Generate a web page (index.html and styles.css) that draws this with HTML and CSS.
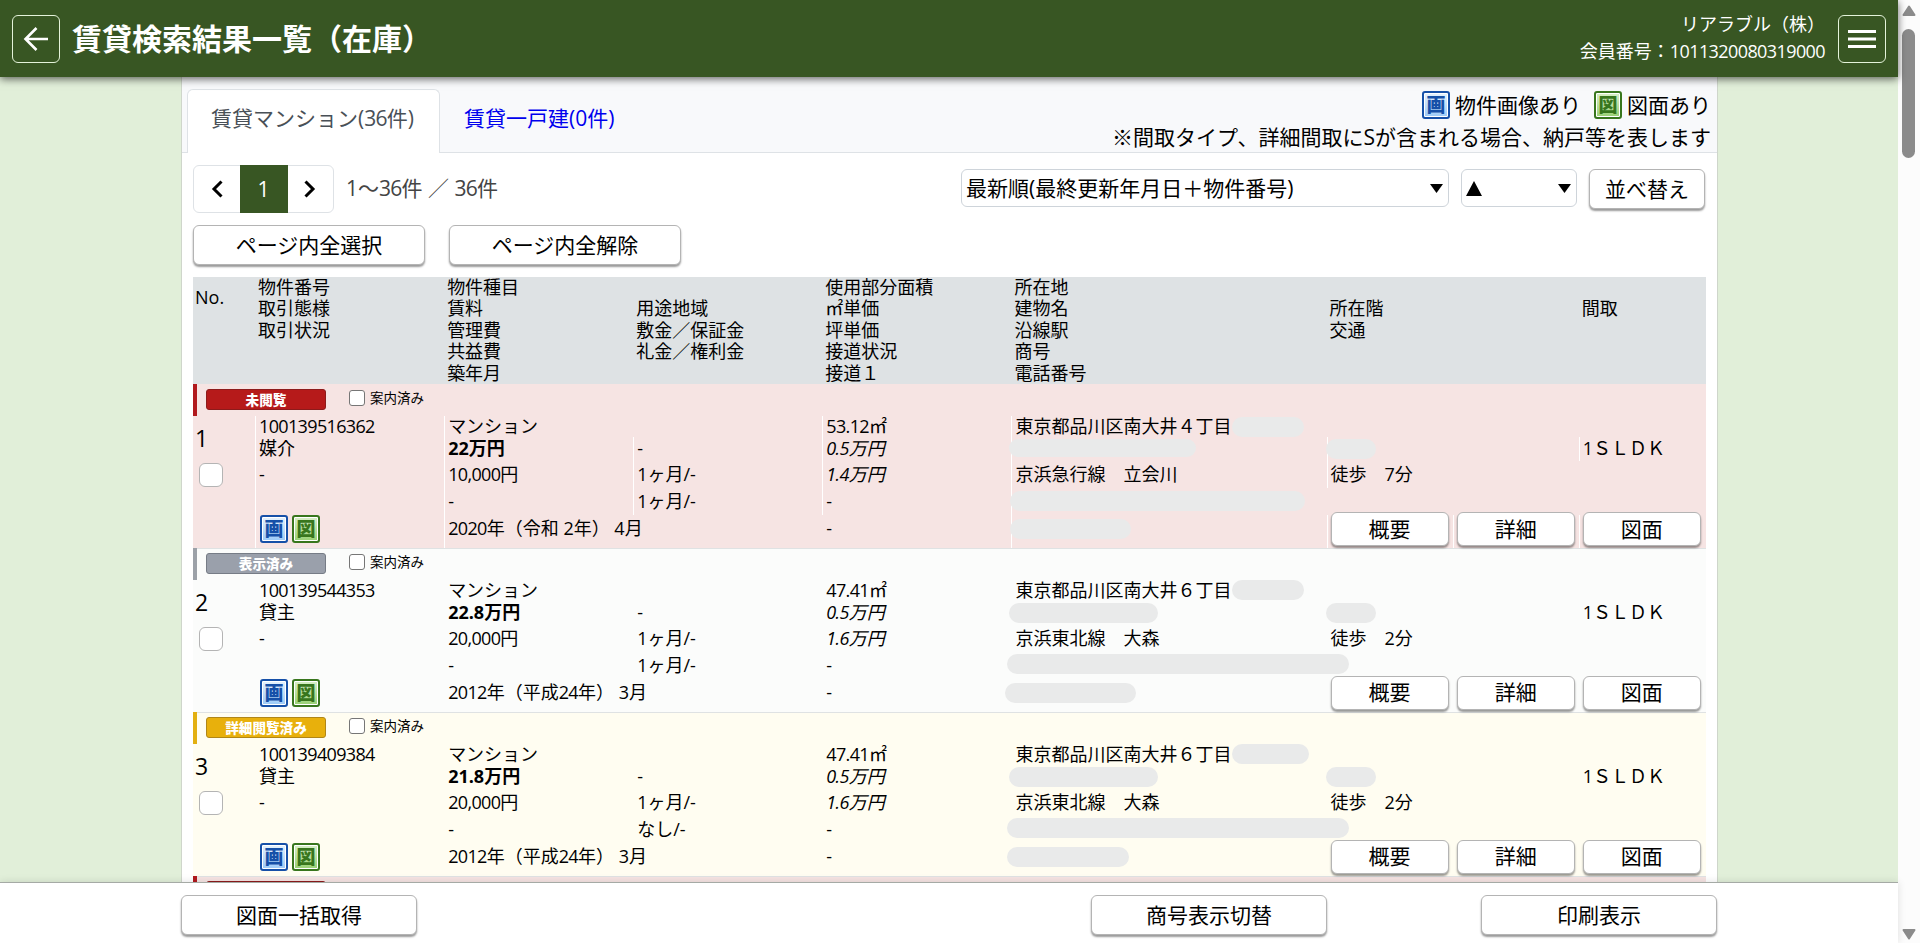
FILE: index.html
```html
<!DOCTYPE html>
<html lang="ja">
<head>
<meta charset="UTF-8" />
<meta name="viewport" content="width=device-width, initial-scale=1" />
<title>賃貸検索結果一覧（在庫）</title>
<link rel="stylesheet" href="styles.css">
</head>
<body>
<div class="app">
  <header class="header">
    <button class="header-btn" aria-label="戻る">
      <svg width="26" height="26" viewBox="0 0 26 26" fill="none" stroke="#fff" stroke-width="2.6"><path d="M25 13H3M13.5 2L2.5 13l11 11"/></svg>
    </button>
    <h1>賃貸検索結果一覧（在庫）</h1>
    <div class="member">
      <div>リアラブル（株）</div>
      <div>会員番号：<span class="num">1011320080319000</span></div>
    </div>
    <button class="header-btn" aria-label="メニュー">
      <svg width="28" height="20" viewBox="0 0 28 20" fill="#fff"><path d="M0 1h28v3H0zM0 8.500h28v3H0zM0 16h28v3H0z"/></svg>
    </button>
  </header>

  <main class="main">
    <div class="container">
      <div class="tabs">
        <a class="tab active">賃貸マンション(<span class="num">36</span>件)</a>
        <a class="tab">賃貸一戸建(0件)</a>
        <div class="legend">
          <div class="legend-icons">
            <span class="icon icon-img">画</span><span>物件画像あり</span>
            <span class="icon icon-zu">図</span><span>図面あり</span>
          </div>
          <div>※間取タイプ、詳細間取にSが含まれる場合、納戸等を表します</div>
        </div>
      </div>

      <div class="toolbar">
        <div class="pager">
          <a><svg width="12" height="18" viewBox="0 0 12 18" fill="none" stroke="#000" stroke-width="3"><path d="M10.500 1.500L3 9l7.500 7.500"/></svg></a>
          <a class="current">1</a>
          <a><svg width="12" height="18" viewBox="0 0 12 18" fill="none" stroke="#000" stroke-width="3"><path d="M1.500 1.500L9 9l-7.500 7.500"/></svg></a>
        </div>
        <div class="count">1～<span class="num">36</span>件 ／ <span class="num">36</span>件</div>
        <div class="select select-sort">
          <span>最新順(最終更新年月日＋物件番号)</span>
          <svg width="13" height="9" viewBox="0 0 13 9"><path d="M0 0h13L6.500 9z"/></svg>
        </div>
        <div class="select select-order">
          <svg width="16" height="15" viewBox="0 0 16 15"><path d="M8 0l8 15H0z"/></svg>
          <svg width="13" height="9" viewBox="0 0 13 9"><path d="M0 0h13L6.500 9z"/></svg>
        </div>
        <button class="btn btn-sort">並べ替え</button>
      </div>

      <div class="select-all">
        <button class="btn">ページ内全選択</button>
        <button class="btn">ページ内全解除</button>
      </div>

      <div class="grid head">
        <div class="c1 head-no">No.</div>
        <div class="c2 r1">物件番号</div>
        <div class="c2 r2">取引態様</div>
        <div class="c2 r3">取引状況</div>
        <div class="c3 r1">物件種目</div>
        <div class="c3 r2">賃料</div>
        <div class="c3 r3">管理費</div>
        <div class="c3 r4">共益費</div>
        <div class="c3 r5">築年月</div>
        <div class="c4 r2">用途地域</div>
        <div class="c4 r3">敷金／保証金</div>
        <div class="c4 r4">礼金／権利金</div>
        <div class="c5 r1">使用部分面積</div>
        <div class="c5 r2">㎡単価</div>
        <div class="c5 r3">坪単価</div>
        <div class="c5 r4">接道状況</div>
        <div class="c5 r5">接道１</div>
        <div class="c6 r1">所在地</div>
        <div class="c6 r2">建物名</div>
        <div class="c6 r3">沿線駅</div>
        <div class="c6 r4">商号</div>
        <div class="c6 r5">電話番号</div>
        <div class="c7 r2">所在階</div>
        <div class="c7 r3">交通</div>
        <div class="c9 r2">間取</div>
      </div>

      <section class="item unread">
        <div class="status">
          <span class="badge">未閲覧</span>
          <label><input type="checkbox" />案内済み</label>
        </div>
        <div class="grid body">
          <div class="c1 no"><span>1</span><input type="checkbox" /></div>
          <div class="c2 r1"><span class="num">100139516362</span></div>
          <div class="c2 r2">媒介</div>
          <div class="c2 r3">-</div>
          <div class="c2 r4"></div>
          <div class="c2 r5 icons"><span class="icon icon-img">画</span><span class="icon icon-zu">図</span></div>
          <div class="c3 r1">マンション</div>
          <div class="c3 r2 price">22万円</div>
          <div class="c3 r3"><span class="num">10,000</span>円</div>
          <div class="c3 r4">-</div>
          <div class="c3 r5"><span class="num">2020</span>年（令和 2年） 4月</div>
          <div class="c4 r2">-</div>
          <div class="c4 r3">1ヶ月/-</div>
          <div class="c4 r4">1ヶ月/-</div>
          <div class="c5 r1"><span class="num">53.12</span>㎡</div>
          <div class="c5 r2 unit"><span class="num">0.5</span>万円</div>
          <div class="c5 r3 unit"><span class="num">1.4</span>万円</div>
          <div class="c5 r4">-</div>
          <div class="c5 r5 noline">-</div>
          <div class="c6 r1">東京都品川区南大井４丁目<i class="mask mask-addr"></i></div>
          <div class="c6 r2"><i class="mask mask-name"></i></div>
          <div class="c6 r3">京浜急行線　立会川</div>
          <div class="c6 r4"><i class="mask mask-shop"></i></div>
          <div class="c6 r5"><i class="mask mask-tel"></i></div>
          <div class="c7 r2"><i class="mask mask-floor"></i></div>
          <div class="c7 r3">徒歩　7分</div>
          <div class="c9 r2">1ＳＬＤＫ</div>
          <div class="c7 r5 action"><button class="btn">概要</button></div>
          <div class="c8 r5 action"><button class="btn">詳細</button></div>
          <div class="c9 r5 action"><button class="btn">図面</button></div>
        </div>
      </section>

      <section class="item shown">
        <div class="status">
          <span class="badge">表示済み</span>
          <label><input type="checkbox" />案内済み</label>
        </div>
        <div class="grid body">
          <div class="c1 no"><span>2</span><input type="checkbox" /></div>
          <div class="c2 r1"><span class="num">100139544353</span></div>
          <div class="c2 r2">貸主</div>
          <div class="c2 r3">-</div>
          <div class="c2 r5 icons"><span class="icon icon-img">画</span><span class="icon icon-zu">図</span></div>
          <div class="c3 r1">マンション</div>
          <div class="c3 r2 price">22.8万円</div>
          <div class="c3 r3"><span class="num">20,000</span>円</div>
          <div class="c3 r4">-</div>
          <div class="c3 r5"><span class="num">2012</span>年（平成<span class="num">24</span>年） 3月</div>
          <div class="c4 r2">-</div>
          <div class="c4 r3">1ヶ月/-</div>
          <div class="c4 r4">1ヶ月/-</div>
          <div class="c5 r1"><span class="num">47.41</span>㎡</div>
          <div class="c5 r2 unit"><span class="num">0.5</span>万円</div>
          <div class="c5 r3 unit"><span class="num">1.6</span>万円</div>
          <div class="c5 r4">-</div>
          <div class="c5 r5 noline">-</div>
          <div class="c6 r1">東京都品川区南大井６丁目<i class="mask mask-addr"></i></div>
          <div class="c6 r2"><i class="mask mask-name"></i></div>
          <div class="c6 r3">京浜東北線　大森</div>
          <div class="c6 r4"><i class="mask mask-shop"></i></div>
          <div class="c6 r5"><i class="mask mask-tel"></i></div>
          <div class="c7 r2"><i class="mask mask-floor"></i></div>
          <div class="c7 r3">徒歩　2分</div>
          <div class="c9 r2">1ＳＬＤＫ</div>
          <div class="c7 r5 action"><button class="btn">概要</button></div>
          <div class="c8 r5 action"><button class="btn">詳細</button></div>
          <div class="c9 r5 action"><button class="btn">図面</button></div>
        </div>
      </section>

      <section class="item viewed">
        <div class="status">
          <span class="badge">詳細閲覧済み</span>
          <label><input type="checkbox" />案内済み</label>
        </div>
        <div class="grid body">
          <div class="c1 no"><span>3</span><input type="checkbox" /></div>
          <div class="c2 r1"><span class="num">100139409384</span></div>
          <div class="c2 r2">貸主</div>
          <div class="c2 r3">-</div>
          <div class="c2 r5 icons"><span class="icon icon-img">画</span><span class="icon icon-zu">図</span></div>
          <div class="c3 r1">マンション</div>
          <div class="c3 r2 price">21.8万円</div>
          <div class="c3 r3"><span class="num">20,000</span>円</div>
          <div class="c3 r4">-</div>
          <div class="c3 r5"><span class="num">2012</span>年（平成<span class="num">24</span>年） 3月</div>
          <div class="c4 r2">-</div>
          <div class="c4 r3">1ヶ月/-</div>
          <div class="c4 r4">なし/-</div>
          <div class="c5 r1"><span class="num">47.41</span>㎡</div>
          <div class="c5 r2 unit"><span class="num">0.5</span>万円</div>
          <div class="c5 r3 unit"><span class="num">1.6</span>万円</div>
          <div class="c5 r4">-</div>
          <div class="c5 r5 noline">-</div>
          <div class="c6 r1">東京都品川区南大井６丁目<i class="mask mask-addr"></i></div>
          <div class="c6 r2"><i class="mask mask-name"></i></div>
          <div class="c6 r3">京浜東北線　大森</div>
          <div class="c6 r4"><i class="mask mask-shop"></i></div>
          <div class="c6 r5"><i class="mask mask-tel"></i></div>
          <div class="c7 r2"><i class="mask mask-floor"></i></div>
          <div class="c7 r3">徒歩　2分</div>
          <div class="c9 r2">1ＳＬＤＫ</div>
          <div class="c7 r5 action"><button class="btn">概要</button></div>
          <div class="c8 r5 action"><button class="btn">詳細</button></div>
          <div class="c9 r5 action"><button class="btn">図面</button></div>
        </div>
      </section>

      <section class="item unread">
        <div class="status">
          <span class="badge"></span>
          <label><input type="checkbox" /></label>
        </div>
      </section>
    </div>
  </main>

  <footer class="footer">
    <div class="footer-inner">
      <button class="btn">図面一括取得</button>
      <button class="btn push">商号表示切替</button>
      <button class="btn">印刷表示</button>
    </div>
  </footer>
</div>

<div class="scrollbar">
  <svg width="14" height="11" viewBox="0 0 14 11" fill="#8b8b8b" stroke="#8b8b8b" stroke-width="2" stroke-linejoin="round"><path d="M7 1.500l5.500 8.500h-11z"/></svg>
  <div class="thumb"></div>
  <svg class="down" width="14" height="11" viewBox="0 0 14 11" fill="#8b8b8b" stroke="#8b8b8b" stroke-width="2" stroke-linejoin="round"><path d="M7 9.500L1.500 1h11z"/></svg>
</div>
</body>
</html>
```
FILE: styles.css
```css
* {
  box-sizing: border-box;
}
body {
  margin: 0;
  height: 100vh;
  display: flex;
  overflow: hidden;
  background: #fcfcfc;
  color: #000;
  font-family: "Open Sans", "Noto Sans CJK JP", sans-serif;
  font-size: 21px;
}
button {
  font-family: inherit;
  padding: 0;
}
.num {
  letter-spacing: -0.036em;
}
.app {
  flex: 1;
  min-width: 0;
  display: flex;
  flex-direction: column;
  background: #e1efd9;
}

/* header */
.header {
  position: relative;
  z-index: 2;
  flex: none;
  height: 77px;
  padding: 0 12px;
  display: flex;
  align-items: center;
  background: #385623;
  color: #fff;
  box-shadow: 0 2px 8px rgba(0, 0, 0, 0.6);
}
.header h1 {
  margin: 0 auto 0 12px;
  font-size: 30px;
  line-height: 40px;
  font-weight: 700;
}
.header-btn {
  width: 48px;
  height: 48px;
  display: flex;
  align-items: center;
  justify-content: center;
  background: none;
  border: 1px solid #e4f3da;
  border-radius: 6px;
}
.member {
  margin-right: 13px;
  padding-bottom: 2px;
  font-size: 18px;
  line-height: 27px;
  text-align: right;
}
.member .num {
  letter-spacing: -0.033em;
}

/* content */
.main {
  flex: 1;
  min-height: 0;
  overflow: hidden;
}
.container {
  width: 1537px;
  margin-left: 181px;
  background: #fff;
  border: solid #cfd6cb;
  border-width: 0 1px;
  height: 100%;
  overflow: hidden;
}
.tabs {
  height: 76px;
  padding: 12px 6px 0 5px;
  display: flex;
  background: #f8f9fb;
  border-bottom: 1px solid #dee2e6;
}
.tab {
  height: 64px;
  padding: 0 24px 0 23px;
  line-height: 56px;
  border: 1px solid transparent;
  border-bottom: none;
  border-radius: 6px 6px 0 0;
  color: #00e;
}
.tab.active {
  width: 253px;
  background: #fff;
  border-color: #dee2e6;
  color: #495057;
}
.legend {
  margin-left: auto;
  line-height: 32px;
  text-align: right;
}
.legend-icons {
  display: flex;
  justify-content: flex-end;
  align-items: center;
  gap: 5px;
}
.legend-icons .icon-zu {
  margin-left: 8px;
}
.icon {
  flex: none;
  display: inline-flex;
  align-items: center;
  justify-content: center;
  width: 28px;
  height: 28px;
  font-size: 19px;
  line-height: 24px;
  font-weight: 900;
  border: 2px solid;
  border-radius: 3px;
  box-shadow: inset 0 0 0 1px #fff;
}
.icon-img {
  color: #1650a8;
  background: linear-gradient(#e6f2fd, #9ccaf8);
}
.icon-zu {
  color: #38761d;
  background: linear-gradient(#d8efc8, #98d074);
}

.toolbar {
  height: 60px;
  padding: 12px 12px 0 11px;
  display: flex;
}
.pager {
  width: 141px;
  height: 48px;
  display: flex;
  border: 1px solid #dee2e6;
  border-radius: 6px;
}
.pager a {
  flex: 1;
  display: flex;
  align-items: center;
  justify-content: center;
}
.pager .current {
  flex: 0 0 48px;
  margin: -1px 0;
  background: #385623;
  color: #fff;
}
.count {
  margin: 0 auto 0 12px;
  line-height: 47px;
  color: #444;
}
.select {
  height: 38px;
  margin: 4px 12px 0 0;
  padding: 0 5px 0 4px;
  display: flex;
  align-items: center;
  justify-content: space-between;
  line-height: 36px;
  border: 1px solid #ced4da;
  border-radius: 6px;
}
.select-sort {
  width: 488px;
}
.select-order {
  width: 116px;
}
.btn {
  height: 40px;
  background: #fff;
  border: 1px solid #b4b4b4;
  border-radius: 6px;
  color: #000;
  font-size: 21px;
  line-height: 36px;
  box-shadow: 0 2px 2px rgba(0, 0, 0, 0.4);
}
.btn-sort {
  width: 116px;
  margin-top: 4px;
}
.select-all {
  height: 64px;
  padding: 12px 11px 0;
  display: flex;
  gap: 24px;
}
.select-all .btn {
  width: 232px;
}

/* list: 24 columns */
.grid {
  display: grid;
  grid-template-columns: repeat(24, 63.04px);
  font-size: 18px;
}
.grid > div {
  padding-left: 3px;
  white-space: nowrap;
}
.c1 { grid-column: 1 / 2; }
.c2 { grid-column: 2 / 5; }
.c3 { grid-column: 5 / 8; }
.c4 { grid-column: 8 / 11; }
.c5 { grid-column: 11 / 14; }
.c6 { grid-column: 14 / 19; }
.c7 { grid-column: 19 / 21; }
.c8 { grid-column: 21 / 23; }
.c9 { grid-column: 23 / 25; }
.r1 { grid-row: 1; }
.r2 { grid-row: 2; }
.r3 { grid-row: 3; }
.r4 { grid-row: 4; }
.r5 { grid-row: 5; }

.head {
  width: 1513px;
  height: 107px;
  margin-left: 11px;
  grid-template-rows: repeat(5, 21.4px);
  line-height: 21.4px;
  background: #dee2e4;
}
.head > div {
  padding-left: 2px;
}
.head > .head-no {
  grid-row: 1 / 6;
  line-height: 40px;
}

.item {
  width: 1513px;
  height: 163.9px;
  margin-left: 11px;
}
.item + .item {
  box-shadow: inset 0 1px #dfe2e3;
}
.unread { background: #f6e4e3; }
.shown { background: #fbfcfb; }
.viewed { background: #fffdf1; }
.status {
  height: 32px;
  padding-left: 9px;
  display: flex;
  align-items: flex-start;
  border-left: 4px solid;
}
.unread .status { border-color: #b1191d; }
.shown .status { border-color: #9ca1a8; }
.viewed .status { border-color: #e3b011; }
.badge {
  width: 120px;
  height: 21px;
  margin-top: 5px;
  border: 1px solid;
  border-radius: 3px;
  color: #fff;
  font-size: 13.6px;
  line-height: 20px;
  font-weight: 900;
  text-align: center;
}
.unread .badge { background: #b61a1a; border-color: #8d1b1b; }
.shown .badge { background: #9aa0ab; border-color: #767c86; }
.viewed .badge { background: #e8b00c; border-color: #b08617; }
.status label {
  margin-left: 23px;
  display: flex;
  font-size: 13.5px;
  line-height: 29px;
}
.status input {
  appearance: none;
  width: 16px;
  height: 16px;
  margin: 6px 5px 0 0;
  background: #fff;
  border: 1.5px solid #767676;
  border-radius: 3px;
}

.body {
  margin-left: -1px;
  grid-template-rows: 21px 24px 27px 27px 32.900px;
  line-height: 27px;
}
.body > div {
  border-left: 1px solid transparent;
}
.body .r1 { line-height: 21px; }
.body .r2 { line-height: 22px; }
.unread .body > div {
  border-left-color: #fff;
}
.body > .no {
  grid-row: 1 / 6;
  border: none !important;
  display: flex;
  flex-direction: column;
  font-size: 23px;
}
.no span {
  margin-top: 9px;
}
.no input {
  appearance: none;
  width: 24px;
  height: 24px;
  margin: 11px 0 0 4px;
  background: #fff;
  border: 1px solid #b4b4b4;
  border-radius: 6px;
}
.unread .body > .noline {
  border-color: transparent;
}
.price {
  font-weight: 700;
}
.unit {
  font-style: italic;
}
.icons {
  display: flex;
  gap: 4px;
}
.icons .icon:first-child {
  margin-left: 1px;
}
.body > .action {
  padding: 0 4px 0 3px;
}
.action .btn {
  display: block;
  width: 100%;
  height: 34px;
  margin-top: -3px;
  line-height: 31px;
}

/* hidden customer data */
.mask {
  display: block;
  height: 20px;
  background: #e9eaea;
  border-radius: 10px;
}
.mask-addr {
  display: inline-block;
  width: 72px;
  margin-left: 1px;
  vertical-align: top;
}
.mask-name { width: 149px; margin: 2px 0 0 -6px; }
.mask-floor { width: 50px; margin: 2px 0 0 -5px; }
.mask-shop { width: 342px; margin: 2px 0 0 -8px; }
.mask-tel { width: 131px; margin: 4px 0 0 -10px; }
.unread .mask-addr { margin-top: 1px; }
.unread .mask-name { width: 187px; height: 18px; }
.unread .mask-shop { width: 295px; margin: 3px 0 0 -5px; }
.unread .mask-tel { width: 121px; margin-left: -5px; }
.viewed .mask-addr { width: 77px; }
.viewed .mask-tel { width: 122px; margin-left: -8px; }

/* footer */
.footer {
  position: relative;
  flex: none;
  height: 61px;
  background: #fff;
  border-top: 1px solid #a5aaa5;
  box-shadow: 0 0 8px rgba(0, 0, 0, 0.12);
}
.footer-inner {
  width: 1536px;
  margin-left: 181px;
  padding-top: 12px;
  display: flex;
}
.footer-inner .btn {
  width: 236px;
}
.footer-inner .push {
  margin: 0 154px 0 auto;
}

/* scrollbar */
.scrollbar {
  flex: none;
  width: 22px;
  padding: 5px 0 3px 4px;
  display: flex;
  flex-direction: column;
}
.thumb {
  width: 13px;
  height: 129px;
  margin-top: 13px;
  background: #8b8b8b;
  border-radius: 7px;
}
.scrollbar .down {
  margin-top: auto;
}
```
